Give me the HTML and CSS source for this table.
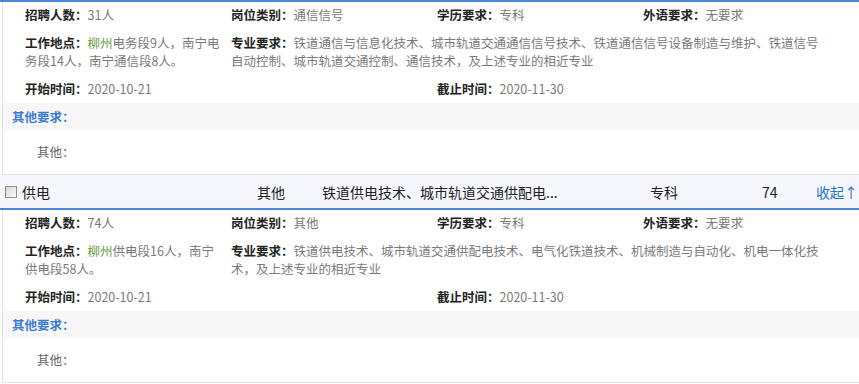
FILE: index.html
```html
<!DOCTYPE html>
<html lang="zh-CN">
<head>
    <meta charset="UTF-8">
    <meta name="viewport" content="width=device-width, initial-scale=1.0">
    <title>招聘岗位</title>
    <link rel="stylesheet" href="styles.css">
</head>
<body>
    <div class="job-list">
        <!-- 通信信号 详情 -->
        <div class="detail">
            <div class="detail-body">
                <div class="info">
                    <div class="item"><b>招聘人数：</b>31人</div>
                    <div class="item"><b>岗位类别：</b>通信信号</div>
                    <div class="item"><b>学历要求：</b>专科</div>
                    <div class="item"><b>外语要求：</b>无要求</div>
                    <div class="item"><b>工作地点：</b><span class="hit">柳州</span>电务段9人，南宁电务段14人，南宁通信段8人。</div>
                    <div class="item wide"><b>专业要求：</b>铁道通信与信息化技术、城市轨道交通通信信号技术、铁道通信信号设备制造与维护、铁道信号自动控制、城市轨道交通控制、通信技术，及上述专业的相近专业</div>
                    <div class="item half"><b>开始时间：</b>2020-10-21</div>
                    <div class="item half"><b>截止时间：</b>2020-11-30</div>
                </div>
                <div class="other-title">其他要求：</div>
                <div class="other-body">其他：</div>
            </div>
        </div>

        <!-- 供电 -->
        <div class="job-row">
            <div class="cell name"><span class="check"></span>供电</div>
            <div class="cell">其他</div>
            <div class="cell">铁道供电技术、城市轨道交通供配电...</div>
            <div class="cell">专科</div>
            <div class="cell">74</div>
            <div class="cell"><a class="toggle" href="#">收起↑</a></div>
        </div>
        <div class="detail">
            <div class="detail-body">
                <div class="info">
                    <div class="item"><b>招聘人数：</b>74人</div>
                    <div class="item"><b>岗位类别：</b>其他</div>
                    <div class="item"><b>学历要求：</b>专科</div>
                    <div class="item"><b>外语要求：</b>无要求</div>
                    <div class="item"><b>工作地点：</b><span class="hit">柳州</span>供电段16人，南宁供电段58人。</div>
                    <div class="item wide"><b>专业要求：</b>铁道供电技术、城市轨道交通供配电技术、电气化铁道技术、机械制造与自动化、机电一体化技术，及上述专业的相近专业</div>
                    <div class="item half"><b>开始时间：</b>2020-10-21</div>
                    <div class="item half"><b>截止时间：</b>2020-11-30</div>
                </div>
                <div class="other-title">其他要求：</div>
                <div class="other-body">其他：</div>
            </div>
        </div>
    </div>
</body>
</html>
```

FILE: styles.css
```css
body {
    margin: 0;
    padding: 0;
    background-color: #fff;
    font-family: "Noto Sans CJK SC", sans-serif;
}

.job-list {
    width: 859px;
}

/* 展开后的岗位详情 */
.detail {
    border-top: 2px solid #4a86d6;
}

.detail-body {
    margin-left: 2px;
    border-left: 1px solid #e2e2e2;
    border-bottom: 1px solid #e2e2e2;
}

.info {
    display: grid;
    grid-template-columns: repeat(4, 206px);
    row-gap: 10px;
    padding: 4px 0 5px 22px;
    font-size: 12.5px;
    line-height: 18px;
    color: #7a7a7a;
}

.item {
    padding-right: 8px;
}

.item b {
    color: #222;
}

.item.wide {
    grid-column: span 3;
    padding-right: 18px;
}

.item.half {
    grid-column: span 2;
}

.hit {
    color: #5f9b3f;
}

.other-title {
    background-color: #f7f7f7;
    padding: 0 9px;
    height: 27px;
    line-height: 27px;
    font-size: 12.5px;
    font-weight: bold;
    color: #3d7dd6;
}

.other-body {
    padding: 13px 0 13px 34px;
    font-size: 12.5px;
    line-height: 18px;
    color: #666;
}

/* 岗位列表行 */
.job-row {
    display: grid;
    grid-template-columns: 257px 65px 328px 112px 54px auto;
    align-items: center;
    height: 33px;
    background-color: #f5f7fc;
    font-size: 14px;
    color: #222;
}

.cell.name {
    display: flex;
    align-items: center;
    padding-left: 5px;
}

.check {
    display: inline-block;
    width: 10px;
    height: 10px;
    margin-right: 5px;
    border: 1px solid #8e8e8e;
    background: linear-gradient(135deg, #d6d6d6, #fbfbfb);
}

.toggle {
    color: #1f74c9;
    text-decoration: none;
}
```
